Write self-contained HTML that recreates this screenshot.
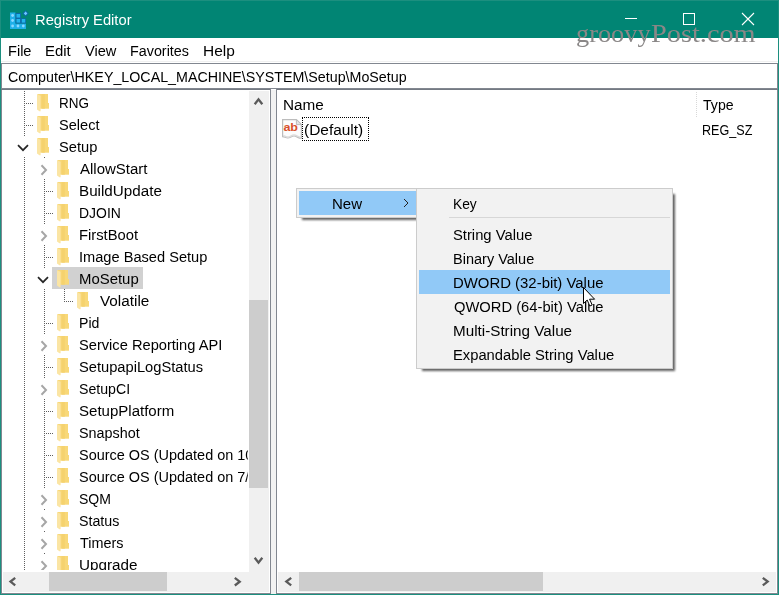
<!DOCTYPE html>
<html><head><meta charset="utf-8"><title>Registry Editor</title>
<style>
html,body{margin:0;padding:0;background:#fff;}
body{width:779px;height:595px;position:relative;overflow:hidden;font-family:"Liberation Sans",sans-serif;font-size:15px;color:#000;}
.a{position:absolute;}
.t{position:absolute;white-space:nowrap;transform-origin:0 0;line-height:20px;height:20px;font-size:15.5px;}
.fo,.ic{position:absolute;}
.z{z-index:2;}
.hd{position:absolute;height:1px;background-image:linear-gradient(to right,#5e5e5e 50%,transparent 50%);background-size:2px 1px;}
.vd{position:absolute;width:1px;background-image:linear-gradient(to bottom,#5e5e5e 50%,transparent 50%);background-size:1px 2px;}
</style></head><body>
<svg width="0" height="0" style="position:absolute"><defs>
<g id="fold"><rect x="0.5" y="0" width="10.5" height="14.7" fill="#f8d878"/><rect x="4.6" y="0" width="3.2" height="14.7" fill="#f5d26e"/><rect x="11" y="9" width="1" height="5.7" fill="#f8d878"/><path d="M0 0.2 L3.6 1.8 L3.6 17.2 L2.4 17.2 L0 15.6 Z" fill="#fbe5a4"/></g>
</defs></svg>

<!-- window frame -->
<div class="a" style="left:0;top:0;width:779px;height:595px;background:#018574"></div>
<div class="a" style="left:0;top:0;width:777px;height:593px;border:1px solid #1c8f7f"></div>
<div class="a" style="left:1px;top:38px;width:777px;height:556px;background:#fff"></div>

<!-- title bar icon -->
<svg class="a" style="left:9px;top:9px" width="22" height="22" viewBox="0 0 22 22">
<rect x="1" y="3.5" width="5.5" height="16.5" fill="#1fb0e8"/><rect x="1" y="14.5" width="16" height="5.5" fill="#1fb0e8"/>
<rect x="6.5" y="4" width="5.5" height="10.5" fill="#0b6aa8"/><rect x="12" y="9.3" width="5" height="5.2" fill="#0b6aa8"/>
<rect x="7.5" y="5" width="3.6" height="3.6" fill="#22b4ea"/><rect x="7.5" y="10" width="3.6" height="3.6" fill="#22b4ea"/><rect x="12.8" y="10" width="3.4" height="3.6" fill="#22b4ea"/>
<circle cx="3.6" cy="6.5" r="1.4" fill="#8ad8ff"/><circle cx="3.6" cy="11.5" r="1.4" fill="#8ad8ff"/><circle cx="3.6" cy="17" r="1.4" fill="#8ad8ff"/><circle cx="9" cy="17" r="1.4" fill="#8ad8ff"/><circle cx="14.3" cy="17" r="1.4" fill="#8ad8ff"/>
<path d="M16.6 1.2 L19.8 4.4 L16.6 7.6 L13.4 4.4 Z" fill="#0b6aa8"/><path d="M16.6 2.6 L18.4 4.4 L16.6 6.2 L14.8 4.4 Z" fill="#6cc8ff"/>
</svg>
<!-- caption buttons -->
<div class="a" style="left:625px;top:18px;width:12px;height:1px;background:#fff"></div>
<div class="a" style="left:683px;top:13px;width:10px;height:10px;border:1px solid #fff"></div>
<svg class="a" style="left:741px;top:12px" width="14" height="14" viewBox="0 0 14 14"><path d="M1 1 L13 13 M13 1 L1 13" stroke="#fff" stroke-width="1.1" fill="none"/></svg>

<!-- menu bar / address bar -->
<div class="a" style="left:1px;top:61px;width:777px;height:1px;background:#f0f0f0"></div>
<div class="a" style="left:1px;top:63px;width:777px;height:1px;background:#828790"></div>
<div class="a" style="left:1px;top:64px;width:1px;height:530px;background:#828790"></div>
<div class="a" style="left:777px;top:64px;width:1px;height:530px;background:#828790"></div>
<div class="a" style="left:1px;top:88px;width:777px;height:1px;background:#828790"></div>
<div class="a" style="left:1px;top:89px;width:777px;height:1px;background:#747a83"></div>
<div class="a" style="left:1px;top:593px;width:777px;height:1px;background:#828790"></div>

<!-- watermark -->
<span class="a" id="wm" style="left:576px;top:17px;font-family:'Liberation Serif',serif;font-size:25px;line-height:34px;color:#8a8787;white-space:nowrap;transform-origin:0 0;z-index:4;transform:scaleX(1.054)">groovy</span><span class="a" style="left:651px;top:17px;font-family:'Liberation Serif',serif;font-size:25px;line-height:34px;color:#8a8787;white-space:nowrap;transform-origin:0 0;z-index:4;transform:scaleX(1.133)">Post.com</span>

<!-- tree pane -->
<div class="a" style="left:52px;top:267px;width:91px;height:22px;background:#d1d1d1"></div>
<svg class="fo" style="left:37px;top:94px" width="13" height="18" viewBox="0 0 13 18"><use href="#fold"/></svg>
<div class="vd" style="left:24px;top:91px;height:22px"></div>
<div class="hd" style="left:26px;top:103px;width:8px"></div>
<svg class="fo" style="left:37px;top:116px" width="13" height="18" viewBox="0 0 13 18"><use href="#fold"/></svg>
<div class="vd" style="left:24px;top:113px;height:22px"></div>
<div class="hd" style="left:26px;top:125px;width:8px"></div>
<svg class="fo" style="left:37px;top:138px" width="13" height="18" viewBox="0 0 13 18"><use href="#fold"/></svg>
<svg class="ic" style="left:15.9px;top:142.8px" width="14" height="10" viewBox="0 0 14 10"><path d="M2 2.1 L7 7.2 L12 2.1" fill="none" stroke="#262626" stroke-width="1.7"/></svg>
<div class="vd" style="left:24px;top:135px;height:1px"></div>
<svg class="fo" style="left:57px;top:160px" width="13" height="18" viewBox="0 0 13 18"><use href="#fold"/></svg>
<div class="vd" style="left:24px;top:157px;height:22px"></div>
<svg class="ic" style="left:39.4px;top:162.5px" width="10" height="14" viewBox="0 0 10 14"><path d="M2.5 2.3 L7.0 7.0 L2.5 11.7" fill="none" stroke="#a6a6a6" stroke-width="2"/></svg>
<div class="vd" style="left:44px;top:157px;height:1px"></div>
<svg class="fo" style="left:57px;top:182px" width="13" height="18" viewBox="0 0 13 18"><use href="#fold"/></svg>
<div class="vd" style="left:24px;top:179px;height:22px"></div>
<div class="vd" style="left:44px;top:179px;height:22px"></div>
<div class="hd" style="left:46px;top:191px;width:8px"></div>
<svg class="fo" style="left:57px;top:204px" width="13" height="18" viewBox="0 0 13 18"><use href="#fold"/></svg>
<div class="vd" style="left:24px;top:201px;height:22px"></div>
<div class="vd" style="left:44px;top:201px;height:22px"></div>
<div class="hd" style="left:46px;top:213px;width:8px"></div>
<svg class="fo" style="left:57px;top:226px" width="13" height="18" viewBox="0 0 13 18"><use href="#fold"/></svg>
<div class="vd" style="left:24px;top:223px;height:22px"></div>
<svg class="ic" style="left:39.4px;top:228.5px" width="10" height="14" viewBox="0 0 10 14"><path d="M2.5 2.3 L7.0 7.0 L2.5 11.7" fill="none" stroke="#a6a6a6" stroke-width="2"/></svg>
<div class="vd" style="left:44px;top:223px;height:1px"></div>
<svg class="fo" style="left:57px;top:248px" width="13" height="18" viewBox="0 0 13 18"><use href="#fold"/></svg>
<div class="vd" style="left:24px;top:245px;height:22px"></div>
<div class="vd" style="left:44px;top:245px;height:22px"></div>
<div class="hd" style="left:46px;top:257px;width:8px"></div>
<svg class="fo" style="left:57px;top:270px" width="13" height="18" viewBox="0 0 13 18"><use href="#fold"/></svg>
<div class="vd" style="left:24px;top:267px;height:22px"></div>
<svg class="ic" style="left:35.9px;top:274.8px" width="14" height="10" viewBox="0 0 14 10"><path d="M2 2.1 L7 7.2 L12 2.1" fill="none" stroke="#262626" stroke-width="1.7"/></svg>
<div class="vd" style="left:44px;top:267px;height:1px"></div>
<svg class="fo" style="left:77px;top:292px" width="13" height="18" viewBox="0 0 13 18"><use href="#fold"/></svg>
<div class="vd" style="left:24px;top:289px;height:22px"></div>
<div class="vd" style="left:44px;top:289px;height:22px"></div>
<div class="vd" style="left:64px;top:289px;height:13px"></div>
<div class="hd" style="left:66px;top:301px;width:8px"></div>
<svg class="fo" style="left:57px;top:314px" width="13" height="18" viewBox="0 0 13 18"><use href="#fold"/></svg>
<div class="vd" style="left:24px;top:311px;height:22px"></div>
<div class="vd" style="left:44px;top:311px;height:22px"></div>
<div class="hd" style="left:46px;top:323px;width:8px"></div>
<svg class="fo" style="left:57px;top:336px" width="13" height="18" viewBox="0 0 13 18"><use href="#fold"/></svg>
<div class="vd" style="left:24px;top:333px;height:22px"></div>
<svg class="ic" style="left:39.4px;top:338.5px" width="10" height="14" viewBox="0 0 10 14"><path d="M2.5 2.3 L7.0 7.0 L2.5 11.7" fill="none" stroke="#a6a6a6" stroke-width="2"/></svg>
<div class="vd" style="left:44px;top:333px;height:1px"></div>
<svg class="fo" style="left:57px;top:358px" width="13" height="18" viewBox="0 0 13 18"><use href="#fold"/></svg>
<div class="vd" style="left:24px;top:355px;height:22px"></div>
<div class="vd" style="left:44px;top:355px;height:22px"></div>
<div class="hd" style="left:46px;top:367px;width:8px"></div>
<svg class="fo" style="left:57px;top:380px" width="13" height="18" viewBox="0 0 13 18"><use href="#fold"/></svg>
<div class="vd" style="left:24px;top:377px;height:22px"></div>
<svg class="ic" style="left:39.4px;top:382.5px" width="10" height="14" viewBox="0 0 10 14"><path d="M2.5 2.3 L7.0 7.0 L2.5 11.7" fill="none" stroke="#a6a6a6" stroke-width="2"/></svg>
<div class="vd" style="left:44px;top:377px;height:1px"></div>
<svg class="fo" style="left:57px;top:402px" width="13" height="18" viewBox="0 0 13 18"><use href="#fold"/></svg>
<div class="vd" style="left:24px;top:399px;height:22px"></div>
<div class="vd" style="left:44px;top:399px;height:22px"></div>
<div class="hd" style="left:46px;top:411px;width:8px"></div>
<svg class="fo" style="left:57px;top:424px" width="13" height="18" viewBox="0 0 13 18"><use href="#fold"/></svg>
<div class="vd" style="left:24px;top:421px;height:22px"></div>
<div class="vd" style="left:44px;top:421px;height:22px"></div>
<div class="hd" style="left:46px;top:433px;width:8px"></div>
<svg class="fo" style="left:57px;top:446px" width="13" height="18" viewBox="0 0 13 18"><use href="#fold"/></svg>
<div class="vd" style="left:24px;top:443px;height:22px"></div>
<div class="vd" style="left:44px;top:443px;height:22px"></div>
<div class="hd" style="left:46px;top:455px;width:8px"></div>
<svg class="fo" style="left:57px;top:468px" width="13" height="18" viewBox="0 0 13 18"><use href="#fold"/></svg>
<div class="vd" style="left:24px;top:465px;height:22px"></div>
<div class="vd" style="left:44px;top:465px;height:22px"></div>
<div class="hd" style="left:46px;top:477px;width:8px"></div>
<svg class="fo" style="left:57px;top:490px" width="13" height="18" viewBox="0 0 13 18"><use href="#fold"/></svg>
<div class="vd" style="left:24px;top:487px;height:22px"></div>
<svg class="ic" style="left:39.4px;top:492.5px" width="10" height="14" viewBox="0 0 10 14"><path d="M2.5 2.3 L7.0 7.0 L2.5 11.7" fill="none" stroke="#a6a6a6" stroke-width="2"/></svg>
<div class="vd" style="left:44px;top:487px;height:1px"></div>
<svg class="fo" style="left:57px;top:512px" width="13" height="18" viewBox="0 0 13 18"><use href="#fold"/></svg>
<div class="vd" style="left:24px;top:509px;height:22px"></div>
<svg class="ic" style="left:39.4px;top:514.5px" width="10" height="14" viewBox="0 0 10 14"><path d="M2.5 2.3 L7.0 7.0 L2.5 11.7" fill="none" stroke="#a6a6a6" stroke-width="2"/></svg>
<div class="vd" style="left:44px;top:509px;height:1px"></div>
<svg class="fo" style="left:57px;top:534px" width="13" height="18" viewBox="0 0 13 18"><use href="#fold"/></svg>
<div class="vd" style="left:24px;top:531px;height:22px"></div>
<svg class="ic" style="left:39.4px;top:536.5px" width="10" height="14" viewBox="0 0 10 14"><path d="M2.5 2.3 L7.0 7.0 L2.5 11.7" fill="none" stroke="#a6a6a6" stroke-width="2"/></svg>
<div class="vd" style="left:44px;top:531px;height:1px"></div>
<svg class="fo" style="left:57px;top:556px" width="13" height="18" viewBox="0 0 13 18"><use href="#fold"/></svg>
<div class="vd" style="left:24px;top:553px;height:22px"></div>
<svg class="ic" style="left:39.4px;top:558.5px" width="10" height="14" viewBox="0 0 10 14"><path d="M2.5 2.3 L7.0 7.0 L2.5 11.7" fill="none" stroke="#a6a6a6" stroke-width="2"/></svg>
<div class="vd" style="left:44px;top:553px;height:1px"></div>

<!-- tree v scrollbar -->
<div class="a z" style="left:249px;top:91px;width:20px;height:501px;background:#f0f0f0"></div>
<div class="a z" style="left:249px;top:300px;width:19px;height:188px;background:#cdcdcd"></div>
<svg class="a z" style="left:253px;top:97px" width="11" height="9" viewBox="0 0 11 9"><path d="M1.7 7.2 L5.5 2.3 L9.3 7.2" fill="none" stroke="#5a5a5a" stroke-width="2.3"/></svg>
<svg class="a z" style="left:253px;top:556px" width="11" height="9" viewBox="0 0 11 9"><path d="M1.7 1.8 L5.5 6.7 L9.3 1.8" fill="none" stroke="#5a5a5a" stroke-width="2.3"/></svg>
<!-- tree h scrollbar -->
<div class="a z" style="left:2px;top:570px;width:247px;height:2px;background:#fff"></div>
<div class="a z" style="left:3px;top:572px;width:246px;height:20px;background:#f0f0f0"></div>
<div class="a z" style="left:49px;top:572px;width:118px;height:19px;background:#cdcdcd"></div>
<svg class="a z" style="left:8px;top:576px" width="9" height="11" viewBox="0 0 9 11"><path d="M7.2 1.8 L2.5 5.6 L7.2 9.4" fill="none" stroke="#5a5a5a" stroke-width="2.3"/></svg>
<svg class="a z" style="left:233px;top:576px" width="9" height="11" viewBox="0 0 9 11"><path d="M1.8 1.9 L6.7 5.7 L1.8 9.5" fill="none" stroke="#5a5a5a" stroke-width="2.3"/></svg>

<!-- splitter -->
<div class="a z" style="left:270px;top:89px;width:1px;height:505px;background:#828790"></div>
<div class="a z" style="left:271px;top:89px;width:5px;height:505px;background:#fff"></div>
<div class="a z" style="left:271px;top:90px;width:5px;height:504px;background:#f2f2f2"></div>
<div class="a z" style="left:276px;top:89px;width:1px;height:505px;background:#828790"></div>

<!-- list pane -->
<div class="vd" style="left:696px;top:92px;height:25px;background-image:linear-gradient(to bottom,#d8d8d8 50%,transparent 50%)"></div>
<div class="a" style="left:302px;top:117px;width:65px;height:22px;border:1px dotted #000"></div>
<svg class="a" style="left:281px;top:118px" width="22" height="22" viewBox="0 0 22 22">
<path d="M1.6 1.6 L15.4 1.6 L20.4 6.6 L20.4 20.2 C17.6 20.6 15.6 18 13 18 C10.4 18 9.4 20 6.8 20 C4.6 20 3.6 18.6 1.6 18.6 Z" fill="#fcfcfc" stroke="#bcbcbc" stroke-width="1.2"/>
<path d="M2.2 17.6 C4 17.6 5 19 6.8 19 C9.2 19 10.4 17 13 17 C15.6 17 17.4 19.4 19.8 19.2" fill="none" stroke="#dcdcdc" stroke-width="1.4"/>
<path d="M15.4 1.6 L15.4 6.6 L20.4 6.6 Z" fill="#e4e4e4" stroke="#bcbcbc" stroke-width="1"/>
<text x="2.4" y="13.4" font-family="Liberation Sans, sans-serif" font-weight="bold" font-size="11.5" fill="#d8502a" textLength="14.6" lengthAdjust="spacingAndGlyphs">ab</text>
</svg>
<!-- list h scrollbar -->
<div class="a" style="left:278px;top:572px;width:498px;height:20px;background:#f0f0f0"></div>
<div class="a" style="left:299px;top:572px;width:244px;height:19px;background:#cdcdcd"></div>
<svg class="a" style="left:283.5px;top:576px" width="9" height="11" viewBox="0 0 9 11"><path d="M7.2 1.8 L2.3 5.6 L7.2 9.4" fill="none" stroke="#5a5a5a" stroke-width="2.3"/></svg>
<svg class="a" style="left:761px;top:576px" width="9" height="11" viewBox="0 0 9 11"><path d="M1.8 1.8 L6.7 5.6 L1.8 9.4" fill="none" stroke="#5a5a5a" stroke-width="2.3"/></svg>

<!-- context menu 1 -->
<div class="a" style="left:302px;top:194px;width:116px;height:25.5px;background:rgba(0,0,0,0.62);filter:blur(1px)"></div>
<div class="a" style="left:296px;top:188px;width:122px;height:28px;border:1px solid #cccccc;background:#f2f2f2"></div>
<div class="a" style="left:299px;top:191px;width:118px;height:24px;background:#91c9f7"></div>
<svg class="a" style="left:402px;top:198px" width="8" height="10" viewBox="0 0 8 10"><path d="M2 1 L6 5 L2 9" fill="none" stroke="#222" stroke-width="1"/></svg>
<!-- submenu -->
<div class="a" style="left:422px;top:194px;width:253px;height:176.5px;background:rgba(0,0,0,0.62);filter:blur(1px)"></div>
<div class="a" style="left:416px;top:188px;width:255px;height:179px;border:1px solid #cccccc;background:#f2f2f2"></div>
<div class="a" style="left:449px;top:217px;width:221px;height:1px;background:#d7d7d7"></div>
<div class="a" style="left:419px;top:270px;width:251px;height:24px;background:#91c9f7"></div>

<span id="title" class="t" style="left:35.00px;top:10.00px;transform:scaleX(0.9499);color:#fff;">Registry Editor</span>
<span id="m1" class="t" style="left:8.00px;top:41.00px;transform:scaleX(0.9392);">File</span>
<span id="m2" class="t" style="left:45.00px;top:41.00px;transform:scaleX(0.9620);">Edit</span>
<span id="m3" class="t" style="left:85.00px;top:41.00px;transform:scaleX(0.9413);">View</span>
<span id="m4" class="t" style="left:130.00px;top:41.00px;transform:scaleX(0.9249);">Favorites</span>
<span id="m5" class="t" style="left:203.00px;top:41.00px;transform:scaleX(0.9968);">Help</span>
<span id="addr" class="t" style="left:8.00px;top:67.00px;transform:scaleX(0.9199);">Computer\HKEY_LOCAL_MACHINE\SYSTEM\Setup\MoSetup</span>
<span id="hname" class="t" style="left:283.00px;top:95.00px;transform:scaleX(0.9860);">Name</span>
<span id="htype" class="t" style="left:703.00px;top:95.00px;transform:scaleX(0.9104);">Type</span>
<span id="def" class="t" style="left:304.00px;top:120.00px;transform:scaleX(0.9965);">(Default)</span>
<span id="regsz" class="t" style="left:702.00px;top:120.00px;transform:scaleX(0.8114);">REG_SZ</span>
<span id="new" class="t" style="left:332.40px;top:194.00px;transform:scaleX(0.9689);">New</span>
<span id="s0" class="t" style="left:452.60px;top:194.00px;transform:scaleX(0.8892);">Key</span>
<span id="s1" class="t" style="left:452.60px;top:225.00px;transform:scaleX(0.9527);">String Value</span>
<span id="s2" class="t" style="left:452.60px;top:249.00px;transform:scaleX(0.9363);">Binary Value</span>
<span id="s3" class="t" style="left:452.60px;top:273.00px;transform:scaleX(0.9619);">DWORD (32-bit) Value</span>
<span id="s4" class="t" style="left:453.60px;top:297.00px;transform:scaleX(0.9506);">QWORD (64-bit) Value</span>
<span id="s5" class="t" style="left:452.60px;top:321.00px;transform:scaleX(0.9827);">Multi-String Value</span>
<span id="s6" class="t" style="left:452.60px;top:345.00px;transform:scaleX(0.9517);">Expandable String Value</span>
<span id="r0" class="t" style="left:59.00px;top:93.00px;transform:scaleX(0.8689);">RNG</span>
<span id="r1" class="t" style="left:59.00px;top:115.00px;transform:scaleX(0.9397);">Select</span>
<span id="r2" class="t" style="left:59.00px;top:137.00px;transform:scaleX(0.9462);">Setup</span>
<span id="r3" class="t" style="left:80.00px;top:159.00px;transform:scaleX(0.9677);">AllowStart</span>
<span id="r4" class="t" style="left:79.00px;top:181.00px;transform:scaleX(0.9809);">BuildUpdate</span>
<span id="r5" class="t" style="left:79.00px;top:203.00px;transform:scaleX(0.8995);">DJOIN</span>
<span id="r6" class="t" style="left:79.00px;top:225.00px;transform:scaleX(0.9530);">FirstBoot</span>
<span id="r7" class="t" style="left:79.00px;top:247.00px;transform:scaleX(0.9424);">Image Based Setup</span>
<span id="r8" class="t" style="left:79.00px;top:269.00px;transform:scaleX(0.9621);">MoSetup</span>
<span id="r9" class="t" style="left:100.00px;top:291.00px;transform:scaleX(0.9859);">Volatile</span>
<span id="r10" class="t" style="left:79.00px;top:313.00px;transform:scaleX(0.9098);">Pid</span>
<span id="r11" class="t" style="left:79.00px;top:335.00px;transform:scaleX(0.9449);">Service Reporting API</span>
<span id="r12" class="t" style="left:79.00px;top:357.00px;transform:scaleX(0.9470);">SetupapiLogStatus</span>
<span id="r13" class="t" style="left:79.00px;top:379.00px;transform:scaleX(0.9122);">SetupCI</span>
<span id="r14" class="t" style="left:79.00px;top:401.00px;transform:scaleX(0.9697);">SetupPlatform</span>
<span id="r15" class="t" style="left:79.00px;top:423.00px;transform:scaleX(0.9263);">Snapshot</span>
<span id="r16" class="t" style="left:79.00px;top:445.00px;transform:scaleX(0.9325);width:181.0px;overflow:hidden;">Source OS (Updated on 10/5/2020)</span>
<span id="r17" class="t" style="left:79.00px;top:467.00px;transform:scaleX(0.9325);width:181.0px;overflow:hidden;">Source OS (Updated on 7/14/2020)</span>
<span id="r18" class="t" style="left:79.00px;top:489.00px;transform:scaleX(0.9054);">SQM</span>
<span id="r19" class="t" style="left:79.00px;top:511.00px;transform:scaleX(0.9186);">Status</span>
<span id="r20" class="t" style="left:80.00px;top:533.00px;transform:scaleX(0.9290);">Timers</span>
<span id="r21" class="t" style="left:79.00px;top:555.00px;transform:scaleX(0.9833);">Upgrade</span>

<!-- cursor -->
<svg class="a" style="left:582px;top:286px" width="14" height="22" viewBox="0 0 14 22"><path d="M1.5 1.5 L1.5 17.5 L5.2 14 L7.8 20 L10.2 19 L7.6 13.2 L12.6 13.2 Z" fill="#fff" stroke="#000" stroke-width="1"/></svg>
</body></html>
